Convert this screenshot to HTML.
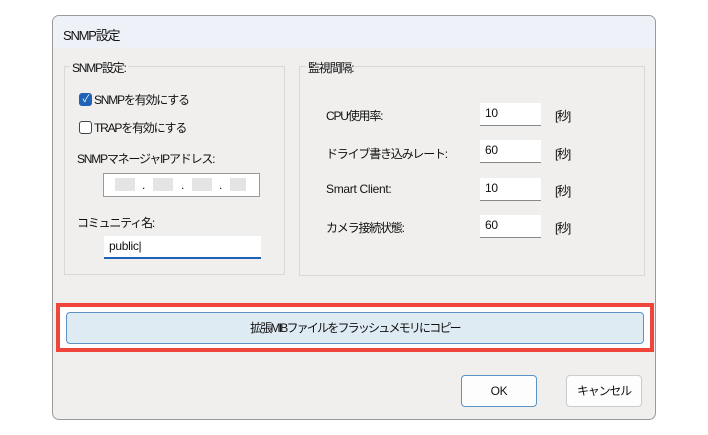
<!DOCTYPE html>
<html><head><meta charset="utf-8"><style>
*{box-sizing:border-box;margin:0;padding:0}
body{width:708px;height:435px;background:#fff;position:relative;overflow:hidden;font-family:"Liberation Sans","Noto Sans CJK JP",sans-serif;font-size:12px;color:#111;letter-spacing:-1.2px}
.a{position:absolute}
.l{letter-spacing:-0.3px}
.dlg{left:52px;top:15px;width:604px;height:405px;background:#f0efee;border:1px solid #9a9a9a;border-radius:7px;overflow:hidden}
.title{left:0;top:0;width:100%;height:32px;background:#eef2f8;padding:9px 0 0 10px;font-size:13px}
.grp{border:1px solid #d8d8d8}
.leg{background:#f0efee;padding:0 2px;font-size:12px}
.inp{background:#fff;border-bottom:1px solid #888;padding:3px 5px;letter-spacing:-0.3px}
.btn{background:#fdfdfd;border:1px solid #ccc;border-radius:4px;text-align:center;line-height:30px}
</style></head><body>
<div class="a dlg">
<div class="a title">SNMP設定</div>
</div>
<div class="a grp" style="left:64px;top:66px;width:221px;height:209px"></div>
<div class="a leg" style="left:70px;top:59px">SNMP設定:</div>
<div class="a grp" style="left:299px;top:66px;width:346px;height:210px"></div>
<div class="a leg" style="left:306px;top:59px">監視間隔:</div>

<div class="a" style="left:79px;top:93px;width:13px;height:13px;background:#1f62b8;border-radius:3px;color:#fff;font-size:10px;line-height:13px;text-align:center">✓</div>
<div class="a" style="left:94px;top:91px">SNMPを有効にする</div>
<div class="a" style="left:79px;top:121px;width:13px;height:13px;border:1px solid #444;border-radius:3px;background:#fff"></div>
<div class="a" style="left:94px;top:119px">TRAPを有効にする</div>
<div class="a" style="left:77px;top:150px">SNMPマネージャIPアドレス:</div>
<div class="a" style="left:103px;top:173px;width:157px;height:24px;background:#fff;border:1px solid #999"></div>
<div class="a" style="left:115px;top:178px;width:20px;height:13px;background:#e4e4e4"></div>
<div class="a" style="left:153px;top:178px;width:20px;height:13px;background:#e4e4e4"></div>
<div class="a" style="left:192px;top:178px;width:20px;height:13px;background:#e4e4e4"></div>
<div class="a" style="left:230px;top:178px;width:16px;height:13px;background:#e4e4e4"></div>
<div class="a" style="left:142px;top:178px">.</div><div class="a" style="left:181px;top:178px">.</div><div class="a" style="left:219px;top:178px">.</div>
<div class="a" style="left:77px;top:214px">コミュニティ名:</div>
<div class="a inp" style="left:104px;top:236px;width:157px;height:23px;border-bottom:2px solid #1f62b8">public|</div>

<div class="a" style="left:326px;top:107px">CPU使用率:</div>
<div class="a" style="left:326px;top:145px">ドライブ書き込みレート:</div>
<div class="a l" style="left:326px;top:182px">Smart Client:</div>
<div class="a" style="left:326px;top:219px">カメラ接続状態:</div>
<div class="a inp" style="left:480px;top:103px;width:61px;height:23px">10</div>
<div class="a inp" style="left:480px;top:140px;width:61px;height:23px">60</div>
<div class="a inp" style="left:480px;top:178px;width:61px;height:23px">10</div>
<div class="a inp" style="left:480px;top:215px;width:61px;height:23px">60</div>
<div class="a" style="left:555px;top:107px">[秒]</div>
<div class="a" style="left:555px;top:145px">[秒]</div>
<div class="a" style="left:555px;top:182px">[秒]</div>
<div class="a" style="left:555px;top:219px">[秒]</div>

<div class="a" style="left:56px;top:303px;width:598px;height:49px;border:4px solid #f0453a;background:#fff"></div>
<div class="a" style="left:66px;top:312px;width:578px;height:32px;background:#deebf3;border:1px solid #5a93c4;border-radius:4px;text-align:center;line-height:30px;letter-spacing:-1.8px">拡張MIBファイルをフラッシュメモリにコピー</div>

<div class="a btn l" style="left:461px;top:375px;width:76px;height:32px;border:1px solid #5a93c4">OK</div>
<div class="a btn" style="left:566px;top:375px;width:76px;height:32px">キャンセル</div>
</body></html>
